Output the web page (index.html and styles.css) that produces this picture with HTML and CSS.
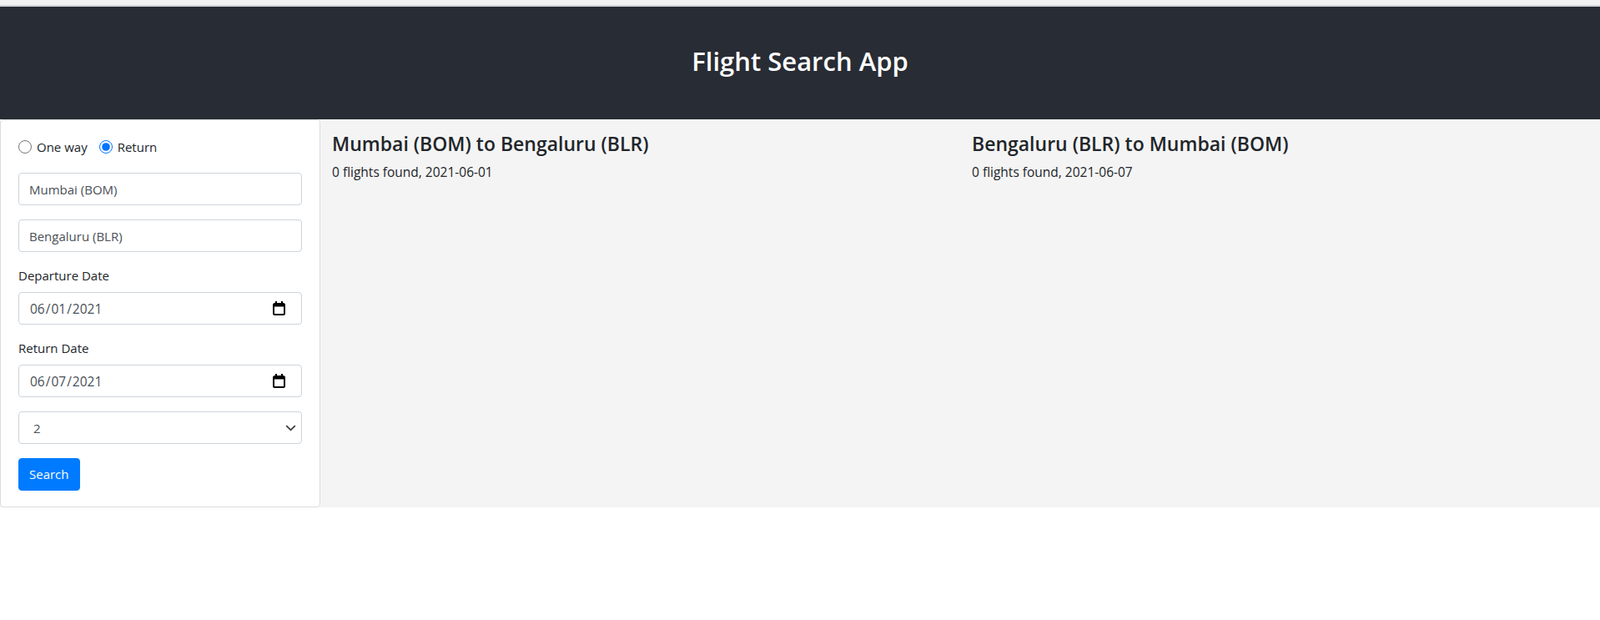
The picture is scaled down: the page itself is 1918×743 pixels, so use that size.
FILE: index.html
```html
<!DOCTYPE html>
<html lang="en">
<head>
<meta charset="utf-8">
<title>Flight Search App</title>
<link rel="stylesheet" href="styles.css">
</head>
<body>
<div class="topstrip"></div>
<header class="app-header">
  <h1 class="app-title">Flight Search App</h1>
</header>
<main class="layout">
  <aside class="card">
    <form class="card-body">
      <div class="trip-type">
        <label class="radio"><input type="radio" name="trip" value="oneway"> One way</label>
        <label class="radio"><input type="radio" name="trip" value="return" checked> Return</label>
      </div>
      <div class="form-group">
        <input class="form-control" type="text" value="Mumbai (BOM)">
      </div>
      <div class="form-group">
        <input class="form-control" type="text" value="Bengaluru (BLR)">
      </div>
      <div class="form-group">
        <label class="form-label">Departure Date</label>
        <div class="field-wrap">
          <input class="form-control date" type="date" value="2021-06-01">
          <svg class="cal-icon" width="15" height="17" viewBox="0 0 15 17"><rect x="3" y="0" width="2" height="4" fill="#000"/><rect x="10" y="0" width="2" height="4" fill="#000"/><rect x="1" y="3" width="13" height="13" rx="1.5" fill="none" stroke="#000" stroke-width="2"/><rect x="1" y="3" width="13" height="3.5" fill="#000"/></svg>
        </div>
      </div>
      <div class="form-group">
        <label class="form-label">Return Date</label>
        <div class="field-wrap">
          <input class="form-control date" type="date" value="2021-06-07">
          <svg class="cal-icon" width="15" height="17" viewBox="0 0 15 17"><rect x="3" y="0" width="2" height="4" fill="#000"/><rect x="10" y="0" width="2" height="4" fill="#000"/><rect x="1" y="3" width="13" height="13" rx="1.5" fill="none" stroke="#000" stroke-width="2"/><rect x="1" y="3" width="13" height="3.5" fill="#000"/></svg>
        </div>
      </div>
      <div class="form-group field-wrap">
        <select class="form-control select">
          <option>1</option>
          <option selected>2</option>
          <option>3</option>
        </select>
        <svg class="chevron" width="13" height="8" viewBox="0 0 13 8"><path d="M1.2 1.2 L6.5 6.3 L11.8 1.2" fill="none" stroke="#3c3c3c" stroke-width="1.8"/></svg>
      </div>
      <button type="button" class="btn">Search</button>
    </form>
  </aside>
  <section class="results">
    <div class="result-col">
      <h4 class="result-title">Mumbai (BOM) to Bengaluru (BLR)</h4>
      <p class="result-meta">0 flights found, 2021-06-01</p>
    </div>
    <div class="result-col">
      <h4 class="result-title">Bengaluru (BLR) to Mumbai (BOM)</h4>
      <p class="result-meta">0 flights found, 2021-06-07</p>
    </div>
  </section>
</main>
</body>
</html>
```
FILE: styles.css
```css
* { box-sizing: border-box; }
html, body { margin: 0; padding: 0; }
body {
  font-family: "Open Sans", "Noto Sans", sans-serif;
  font-size: 15px;
  line-height: 1.5;
  color: #212529;
  background: #fff;
}
.topstrip {
  height: 8px;
  background: #f3f3f3;
  border-bottom: 2px solid #d3d4d7;
}
.app-header {
  height: 135px;
  background: #282c34;
  display: flex;
  align-items: center;
  justify-content: center;
}
.app-title {
  margin: 0;
  color: #fff;
  font-size: 31px;
  font-weight: 600;
  line-height: 1.2;
  padding-bottom: 4px;
}
.layout {
  display: flex;
  background: #f4f4f4;
}
.card {
  width: 384px;
  flex: none;
  background: #fff;
  border: 1px solid #dcdcdc;
  border-radius: 4px;
}
.card-body {
  padding: 20px 21px 19px 21px;
  margin: 0;
}
.trip-type {
  display: flex;
  gap: 14px;
  margin-bottom: 19px;
  height: 24px;
  align-items: center;
}
.radio {
  display: flex;
  align-items: center;
  gap: 6px;
  font-size: 15px;
}
.radio input {
  margin: 0;
  width: 16px;
  height: 16px;
  accent-color: #0075ff;
}
.form-group { margin-bottom: 17px; }
.form-label {
  display: block;
  margin-bottom: 8px;
  font-size: 15px;
  line-height: 23px;
}
.form-control {
  display: block;
  width: 100%;
  height: 39px;
  padding: 6px 12px;
  font-family: inherit;
  font-size: 15px;
  color: #495057;
  background: #fff;
  border: 1px solid #ced4da;
  border-radius: 4px;
}
.date { font-size: 15.5px; }
.field-wrap { position: relative; }
.date::-webkit-calendar-picker-indicator {
  opacity: 0;
}
.cal-icon {
  position: absolute;
  right: 20px;
  top: 11px;
  pointer-events: none;
}
.select {
  appearance: none;
  -webkit-appearance: none;
  padding-left: 17px;
}
.chevron {
  position: absolute;
  right: 7px;
  top: 16px;
  pointer-events: none;
}
.btn {
  font-family: inherit;
  font-size: 15px;
  color: #fff;
  background: #007bff;
  border: 1px solid #007bff;
  border-radius: 4px;
  padding: 6px 12px;
  height: 39px;
  line-height: 1.5;
}
.results {
  flex: 1;
  display: grid;
  grid-template-columns: 1fr 1fr;
  align-content: start;
}
.result-col { padding: 16px 14px; }
.result-title {
  margin: 0 0 8px;
  font-size: 23px;
  font-weight: 600;
  line-height: 1.2;
}
.result-meta {
  margin: 0;
  font-size: 15.5px;
}
```
